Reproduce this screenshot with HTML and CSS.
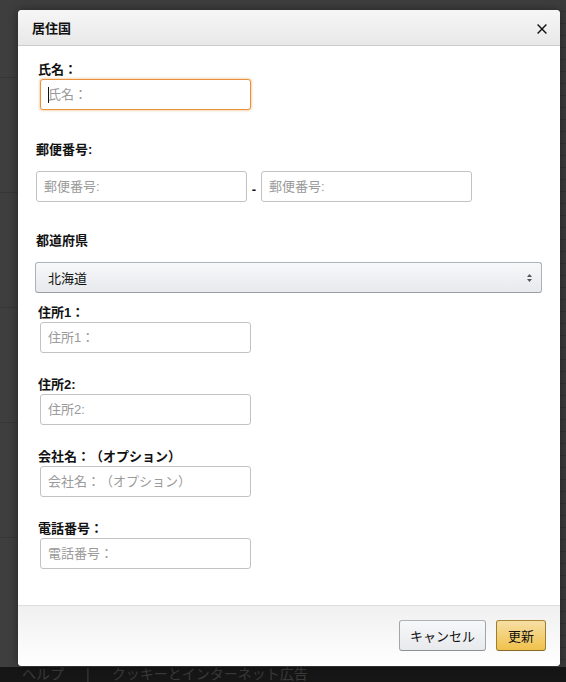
FILE: index.html
```html
<!DOCTYPE html>
<html lang="ja">
<head>
<meta charset="utf-8">
<title>居住国</title>
<link rel="stylesheet" href="styles.css">
</head>
<body>
<div class="page">
  <div class="page-main">
    <div class="page-rows">
      <div class="row row-first"></div>
      <div class="row"></div>
      <div class="row"></div>
      <div class="row"></div>
      <div class="row"></div>
    </div>
    <div class="page-side"></div>
  </div>
  <footer class="site-footer">
    <span>ヘルプ</span><span class="sep">|</span><span>クッキーとインターネット広告</span>
  </footer>
</div>

<div class="modal" role="dialog" aria-labelledby="modal-title">
  <div class="modal-header">
    <h4 class="modal-title" id="modal-title">居住国</h4>
    <button class="close" type="button" aria-label="閉じる">
      <svg width="10" height="10" viewBox="0 0 10 10"><path d="M0.6 0.6 L9.4 9.4 M9.4 0.6 L0.6 9.4" stroke="#111" stroke-width="1.4" fill="none"/></svg>
    </button>
  </div>
  <div class="modal-body">
    <div class="field field-name">
      <label class="label">氏名：</label>
      <div class="input-wrap is-focused"><input class="input input-focus" type="text" placeholder="氏名："></div>
    </div>
    <div class="field field-postal">
      <label class="label label-gap">郵便番号:</label>
      <div class="postal-row">
        <input class="input input-flat" type="text" placeholder="郵便番号:">
        <span class="dash">-</span>
        <input class="input input-flat" type="text" placeholder="郵便番号:">
      </div>
    </div>
    <div class="field field-pref">
      <label class="label label-gap">都道府県</label>
      <div class="select" role="combobox" aria-expanded="false">
        <span>北海道</span>
        <svg width="5" height="8" viewBox="0 0 5 8"><path d="M0 3 L2.5 0 L5 3 Z M0 5 L5 5 L2.5 8 Z" fill="#555"/></svg>
      </div>
    </div>
    <div class="field">
      <label class="label">住所1：</label>
      <div class="input-wrap"><input class="input" type="text" placeholder="住所1："></div>
    </div>
    <div class="field">
      <label class="label">住所2:</label>
      <div class="input-wrap"><input class="input" type="text" placeholder="住所2:"></div>
    </div>
    <div class="field">
      <label class="label">会社名：（オプション）</label>
      <div class="input-wrap"><input class="input" type="text" placeholder="会社名：（オプション）"></div>
    </div>
    <div class="field">
      <label class="label">電話番号：</label>
      <div class="input-wrap"><input class="input" type="text" placeholder="電話番号："></div>
    </div>
  </div>
  <div class="modal-footer">
    <button class="btn btn-default" type="button">キャンセル</button>
    <button class="btn btn-primary" type="button">更新</button>
  </div>
</div>
</body>
</html>
```
FILE: styles.css
```css
html, body {
  margin: 0;
  padding: 0;
}

body {
  width: 566px;
  height: 682px;
  overflow: hidden;
  position: relative;
  background: #3e3e3e;
  font-family: "Liberation Sans", "Noto Sans CJK JP", sans-serif;
  color: #111;
  text-spacing-trim: space-all;
}

/* dimmed page underneath */
.page {
  display: flex;
  flex-direction: column;
  height: 682px;
}

.page-main {
  flex: 1;
  display: flex;
}

.page-rows {
  flex: 1;
}

.row {
  height: 114px;
  border-bottom: 1px solid #363636;
}

.row-first {
  height: 77px;
}

.page-side {
  width: 6px;
  background: repeating-linear-gradient(to bottom, #3b3b3b 0 11px, #333 11px 12px);
}

.site-footer {
  height: 15px;
  flex: none;
  overflow: hidden;
  background: #161616;
  color: #3a3a3a;
  font-size: 14px;
  line-height: 15px;
  padding-left: 22px;
  display: flex;
  white-space: nowrap;
}

.site-footer .sep {
  margin: 0 22px;
}

/* modal */
.modal {
  position: absolute;
  left: 18px;
  top: 10px;
  width: 542px;
  height: 656px;
  display: flex;
  flex-direction: column;
  background: #fff;
  border-radius: 4px;
  overflow: hidden;
  box-shadow: 0 0 10px rgba(0, 0, 0, 0.4);
}

.modal-header {
  flex: none;
  box-sizing: border-box;
  height: 36px;
  padding: 2px 13px 0 14px;
  border-bottom: 1px solid #cbcbcb;
  background: linear-gradient(#f6f6f6, #e8e8e8);
  display: flex;
  align-items: center;
  justify-content: space-between;
}

.modal-title {
  margin: 0;
  font-size: 13px;
  font-weight: bold;
  line-height: 18px;
  color: #111;
}

.close {
  border: 0;
  background: none;
  padding: 0;
  width: 10px;
  height: 10px;
  display: block;
  cursor: pointer;
}

.close svg {
  display: block;
}

.modal-body {
  flex: 1;
  padding: 15px 18px 0;
}

.field {
  margin-bottom: 23px;
}

.field-name {
  margin-bottom: 31px;
}

.field-postal {
  margin-bottom: 30px;
}

.field-pref {
  margin-bottom: 11px;
}

.label {
  display: block;
  margin-left: 2px;
  font-size: 13px;
  font-weight: bold;
  line-height: 18px;
  color: #111;
}

.label-gap {
  margin-left: 0;
  margin-bottom: 12px;
}

.input-wrap {
  position: relative;
  width: 211px;
  margin-left: 4px;
}

.input {
  display: block;
  box-sizing: border-box;
  width: 211px;
  height: 31px;
  margin: 0;
  padding: 0 7px;
  border: 1px solid #c2c2c2;
  border-radius: 3px;
  background: #fff;
  font-family: "Liberation Sans", "Noto Sans CJK JP", sans-serif;
  font-size: 13px;
  color: #111;
  outline: none;
  text-spacing-trim: space-all;
}

.input::placeholder {
  color: #9a9a9a;
}

.input-focus {
  border-color: #e8923f;
  box-shadow: 0 0 2px 1px rgba(228, 121, 17, 0.3);
}

.is-focused::after {
  content: "";
  position: absolute;
  left: 8px;
  top: 8px;
  width: 1px;
  height: 16px;
  background: #111;
}

.postal-row {
  display: flex;
}

.dash {
  width: 14px;
  align-self: flex-end;
  text-align: center;
  font-size: 13px;
  font-weight: bold;
  line-height: 24px;
  color: #111;
}

.select {
  display: flex;
  align-items: center;
  justify-content: space-between;
  box-sizing: border-box;
  height: 31px;
  margin-left: -1px;
  padding: 0 9px 0 12px;
  border: 1px solid #adb1b8;
  border-bottom-color: #9a9ea5;
  border-radius: 3px;
  background: linear-gradient(#f7f8fa, #e7e9ec);
  font-size: 13px;
  color: #111;
}

.select svg {
  display: block;
}

.modal-footer {
  flex: none;
  box-sizing: border-box;
  height: 61px;
  border-top: 1px solid #dcdcdc;
  background: linear-gradient(#f0f0f0, #fff);
  display: flex;
  justify-content: flex-end;
  align-items: flex-start;
  gap: 10px;
  padding: 14px 14px 0 0;
}

.btn {
  height: 31px;
  box-sizing: border-box;
  padding: 0 10px;
  border: 1px solid;
  border-radius: 3px;
  font-family: "Liberation Sans", "Noto Sans CJK JP", sans-serif;
  font-size: 13px;
  color: #111;
  cursor: pointer;
}

.btn-default {
  border-color: #adb1b8 #a2a6ac #8d9096;
  background: linear-gradient(#f7f8fa, #e7e9ec);
}

.btn-primary {
  padding: 0 11px;
  border-color: #a88734 #9c7e31 #846a29;
  background: linear-gradient(#f7dfa5, #f0c14b);
}
```
